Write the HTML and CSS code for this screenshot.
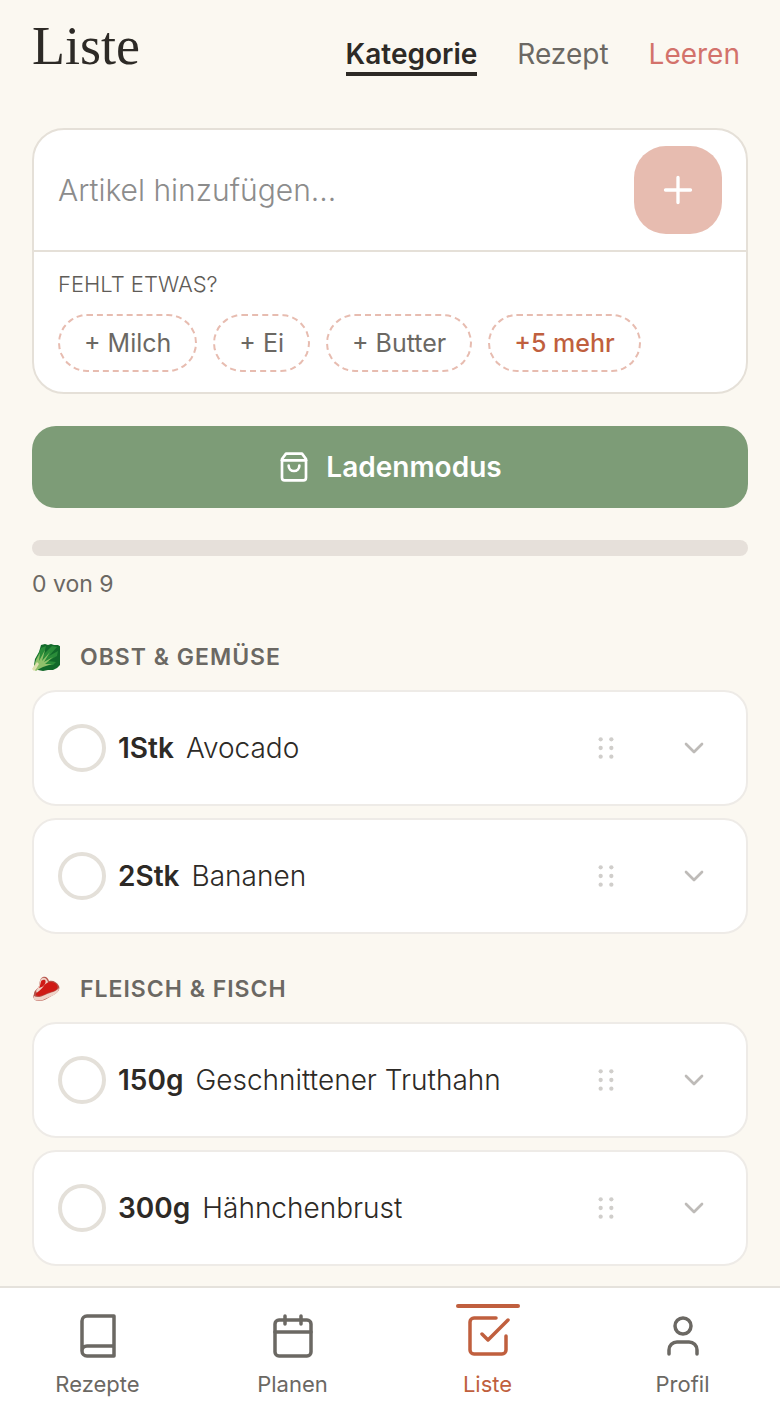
FILE: index.html
```
<!DOCTYPE html>
<html lang="de">
<head>
    <meta charset="UTF-8">
    <meta name="viewport" content="width=device-width, initial-scale=1.0">
    <title>Liste</title>
    <link rel="stylesheet" href="styles.css">
</head>
<body>
    <!-- Shared icons -->
    <svg class="icon-defs" aria-hidden="true">
        <symbol id="icon-grip" viewBox="0 0 24 24">
            <circle cx="8" cy="5.5" r="1.6"/>
            <circle cx="16" cy="5.5" r="1.6"/>
            <circle cx="8" cy="12" r="1.6"/>
            <circle cx="16" cy="12" r="1.6"/>
            <circle cx="8" cy="18.5" r="1.6"/>
            <circle cx="16" cy="18.5" r="1.6"/>
        </symbol>
        <symbol id="icon-chevron" viewBox="0 0 24 24">
            <path d="m6 9 6 6 6-6"/>
        </symbol>
    </svg>

    <main class="page">
        <header class="header">
            <h1>Liste</h1>
            <div class="tabs">
                <button type="button" class="tab active">Kategorie</button>
                <button type="button" class="tab">Rezept</button>
                <button type="button" class="tab clear">Leeren</button>
            </div>
        </header>

        <section class="add-card">
            <form class="add-row">
                <input type="text" class="add-input" placeholder="Artikel hinzufügen..." aria-label="Artikel hinzufügen">
                <button type="button" class="add-btn" aria-label="Hinzufügen">
                    <svg viewBox="0 0 24 24"><path d="M4.5 12h15M12 4.5v15"/></svg>
                </button>
            </form>
            <div class="suggestions">
                <p class="suggestions-title">FEHLT ETWAS?</p>
                <div class="chips">
                    <button type="button" class="chip">+ Milch</button>
                    <button type="button" class="chip">+ Ei</button>
                    <button type="button" class="chip">+ Butter</button>
                    <button type="button" class="chip more">+5 mehr</button>
                </div>
            </div>
        </section>

        <button type="button" class="shop-btn">
            <svg viewBox="0 0 24 24"><path d="M6 2 3 6v14a2 2 0 0 0 2 2h14a2 2 0 0 0 2-2V6l-3-4Z"/><path d="M3 7h18"/><path d="M16 11a4 4 0 0 1-8 0"/></svg>
            Ladenmodus
        </button>

        <div class="progress"></div>
        <p class="progress-text">0 von 9</p>

        <section class="group">
            <h2 class="group-title">
                <svg class="emoji" viewBox="0 0 28 28" aria-hidden="true">
                    <path fill="#12692a" d="M2 22 3 16l4-7 2-7 4-1 3 1 3-1 3 1 4 0 3 2-1 4 1 4-1 5 0 5-3 3-4 2-5 0-5 1-5-1z"/>
                    <path fill="#2a8c39" d="M3 23 4 16l5-11 5-2-2 8 8-8 5 1-8 9 9-5-1 5-9 5 8 1-3 3-8 0-6 2z"/>
                    <path fill="#8fc06a" d="M1 26 4 17l4-7-1 8 6-11-3 11 8-9-6 10 9-5-8 7 7 0-9 3-4 2-3 2z"/>
                    <path fill="#dfe0ae" d="m0 26 5-7 2 2-3 5-2 2z"/>
                </svg>
                OBST &amp; GEMÜSE
            </h2>
            <ul class="items">
                <li class="item">
                    <input type="checkbox" id="avocado">
                    <label for="avocado"><strong>1Stk</strong>Avocado</label>
                    <button type="button" class="item-btn" aria-label="Verschieben"><svg class="grip"><use href="#icon-grip"/></svg></button>
                    <button type="button" class="item-btn" aria-label="Mehr anzeigen"><svg class="chevron"><use href="#icon-chevron"/></svg></button>
                </li>
                <li class="item">
                    <input type="checkbox" id="bananen">
                    <label for="bananen"><strong>2Stk</strong>Bananen</label>
                    <button type="button" class="item-btn" aria-label="Verschieben"><svg class="grip"><use href="#icon-grip"/></svg></button>
                    <button type="button" class="item-btn" aria-label="Mehr anzeigen"><svg class="chevron"><use href="#icon-chevron"/></svg></button>
                </li>
            </ul>
        </section>

        <section class="group">
            <h2 class="group-title">
                <svg class="emoji" viewBox="0 0 28 28" aria-hidden="true">
                    <path fill="#b5534a" d="M2 19c0-4 4-5 5-8 1-3 0-7 4-9 3-1 5 1 6 4 4-1 8 1 10 5 1 3 0 5-4 8l-7 4c-4 3-10 4-13 2-2-2-2-4-1-6z"/>
                    <path fill="#efd3c8" d="M2 21c3 2 7 1 11-1 6-3 11-3 14-7 0 3-2 5-5 7l-9 4c-4 2-9 2-11 0z"/>
                    <path fill="#efd3c8" d="M7 11c1-4 1-8 4-8 3-1 4 2 5 4l-3 5-8 6-1-2z"/>
                    <path fill="#cf1a15" d="M4 19c1-2 5-4 7-7 3-5 10-7 14-2 2 4-2 6-6 7-5 1-8 4-12 4-2 0-4-1-3-2z"/>
                    <path fill="#cf1a15" d="M7 13c2-3 1-8 4-8 3-1 3 2 2 4-1 2-3 3-6 4z"/>
                </svg>
                FLEISCH &amp; FISCH
            </h2>
            <ul class="items">
                <li class="item">
                    <input type="checkbox" id="truthahn">
                    <label for="truthahn"><strong>150g</strong>Geschnittener Truthahn</label>
                    <button type="button" class="item-btn" aria-label="Verschieben"><svg class="grip"><use href="#icon-grip"/></svg></button>
                    <button type="button" class="item-btn" aria-label="Mehr anzeigen"><svg class="chevron"><use href="#icon-chevron"/></svg></button>
                </li>
                <li class="item">
                    <input type="checkbox" id="haehnchen">
                    <label for="haehnchen"><strong>300g</strong>Hähnchenbrust</label>
                    <button type="button" class="item-btn" aria-label="Verschieben"><svg class="grip"><use href="#icon-grip"/></svg></button>
                    <button type="button" class="item-btn" aria-label="Mehr anzeigen"><svg class="chevron"><use href="#icon-chevron"/></svg></button>
                </li>
            </ul>
        </section>
    </main>

    <nav class="bottom-nav">
        <a href="#" class="nav-link">
            <svg viewBox="0 0 24 24"><path d="M4 19.5v-15A2.5 2.5 0 0 1 6.5 2H20v20H6.5a2.5 2.5 0 0 1 0-5H20"/></svg>
            Rezepte
        </a>
        <a href="#" class="nav-link">
            <svg viewBox="0 0 24 24"><rect x="3" y="4" width="18" height="18" rx="2"/><path d="M8 2v4M16 2v4M3 10h18"/></svg>
            Planen
        </a>
        <a href="#" class="nav-link active">
            <svg viewBox="0 0 24 24"><path d="m9 11 3 3L22 4"/><path d="M21 12v7a2 2 0 0 1-2 2H5a2 2 0 0 1-2-2V5a2 2 0 0 1 2-2h11"/></svg>
            Liste
        </a>
        <a href="#" class="nav-link">
            <svg viewBox="0 0 24 24"><path d="M19 21v-2a4 4 0 0 0-4-4H9a4 4 0 0 0-4 4v2"/><circle cx="12" cy="7" r="4"/></svg>
            Profil
        </a>
    </nav>
</body>
</html>
```
FILE: styles.css
```
* {
    box-sizing: border-box;
}

body {
    display: flex;
    flex-direction: column;
    min-height: 100vh;
    margin: 0;
    font-family: Inter, sans-serif;
    color: #2d2a26;
    background-color: #fbf8f1;
}

h1, h2, p, ul {
    margin: 0;
    padding: 0;
}

button, input {
    font-family: inherit;
    color: inherit;
}

button {
    border: none;
    padding: 0;
    background: none;
    cursor: pointer;
}

svg {
    flex-shrink: 0;
    fill: none;
    stroke: currentColor;
    stroke-width: 2;
    stroke-linecap: round;
    stroke-linejoin: round;
}

.icon-defs {
    position: absolute;
    width: 0;
    height: 0;
}

.page {
    flex: 1;
    padding: 16px 32px 20px;
}

/* Header */
.header {
    display: flex;
    justify-content: space-between;
    align-items: flex-start;
    padding-right: 8px;
    margin-bottom: 52px;
}

.header h1 {
    font-family: "Liberation Serif", serif;
    font-size: 54px;
    font-weight: 400;
    line-height: 60px;
}

.tabs {
    display: flex;
    gap: 40px;
    padding-top: 20px;
}

.tab {
    font-size: 28px;
    line-height: 36px;
    border-bottom: 4px solid transparent;
    color: #6b6863;
}

.tab.active {
    font-weight: 600;
    color: #2d2a26;
    border-color: #2d2a26;
}

.tab.clear {
    color: #d3726b;
}

/* Add item */
.add-card {
    margin-bottom: 32px;
    background-color: #fff;
    border: 2px solid #e5e0d8;
    border-radius: 32px;
}

.add-row {
    display: flex;
    align-items: center;
    gap: 16px;
    padding: 16px 24px;
    border-bottom: 2px solid #e5e0d8;
}

.add-input {
    flex: 1;
    min-width: 0;
    padding: 0;
    border: none;
    outline: none;
    background: none;
    font-size: 30px;
    font-weight: 300;
}

.add-input::placeholder {
    color: #8c8c8c;
}

.add-btn {
    display: flex;
    align-items: center;
    justify-content: center;
    width: 88px;
    height: 88px;
    border-radius: 32px;
    color: #fff;
    background-color: #e7bcb0;
}

.add-btn svg {
    width: 40px;
    height: 40px;
}

.suggestions {
    padding: 16px 24px 20px;
}

.suggestions-title {
    margin-bottom: 14px;
    font-size: 22px;
    font-weight: 300;
    line-height: 32px;
    color: #5f5c58;
}

.chips {
    display: flex;
    flex-wrap: wrap;
    gap: 16px;
}

.chip {
    padding: 0 24px;
    border: 2px dashed #e7bcb0;
    border-radius: 32px;
    font-size: 25px;
    line-height: 54px;
    color: #6b6863;
}

.chip.more {
    font-weight: 500;
    color: #c05f3e;
}

/* Shop mode and progress */
.shop-btn {
    display: flex;
    align-items: center;
    justify-content: center;
    gap: 16px;
    width: 100%;
    height: 82px;
    margin-bottom: 32px;
    border-radius: 24px;
    font-size: 28px;
    font-weight: 600;
    color: #fff;
    background-color: #7d9c77;
}

.shop-btn svg {
    width: 32px;
    height: 32px;
}

.progress {
    height: 16px;
    margin-bottom: 12px;
    border-radius: 8px;
    background-color: #e6e0da;
}

.progress-text {
    font-size: 23px;
    line-height: 32px;
    color: #6b6863;
}

/* Groups */
.group {
    padding-top: 40px;
}

.progress-text + .group {
    padding-top: 42px;
}

.group-title {
    display: flex;
    align-items: center;
    gap: 20px;
    margin-bottom: 18px;
    font-size: 23px;
    font-weight: 600;
    line-height: 30px;
    letter-spacing: 1px;
    color: #6b6863;
}

.emoji {
    width: 28px;
    height: 28px;
    stroke: none;
}

.items {
    display: flex;
    flex-direction: column;
    gap: 12px;
    list-style: none;
}

.item {
    display: flex;
    align-items: center;
    height: 116px;
    padding: 0 8px 0 24px;
    background-color: #fff;
    border: 2px solid #eeebe7;
    border-radius: 24px;
}

.item input {
    appearance: none;
    width: 48px;
    height: 48px;
    margin: 0 12px 0 0;
    border: 4px solid #e4e0d9;
    border-radius: 50%;
}

.item label {
    flex: 1;
    font-size: 28px;
    font-weight: 300;
}

.item strong {
    margin-right: 12px;
    font-weight: 600;
}

.item-btn {
    display: flex;
    align-items: center;
    justify-content: center;
    width: 88px;
    height: 88px;
    color: #bebbb8;
}

.grip {
    width: 32px;
    height: 32px;
    fill: #d0cecb;
    stroke: none;
}

.chevron {
    width: 32px;
    height: 32px;
}

/* Bottom navigation */
.bottom-nav {
    position: sticky;
    bottom: 0;
    display: flex;
    height: 138px;
    border-top: 2px solid #e5e2dc;
    background-color: #fff;
}

.nav-link {
    position: relative;
    flex: 1;
    display: flex;
    flex-direction: column;
    align-items: center;
    gap: 8px;
    padding-top: 24px;
    font-size: 22px;
    line-height: 32px;
    text-decoration: none;
    color: #6b6863;
}

.nav-link svg {
    width: 48px;
    height: 48px;
    stroke-width: 1.75;
}

.nav-link.active {
    color: #c05f3e;
}

.nav-link.active::before {
    content: "";
    position: absolute;
    top: 16px;
    width: 64px;
    height: 4px;
    border-radius: 2px;
    background-color: #c05f3e;
}
```
